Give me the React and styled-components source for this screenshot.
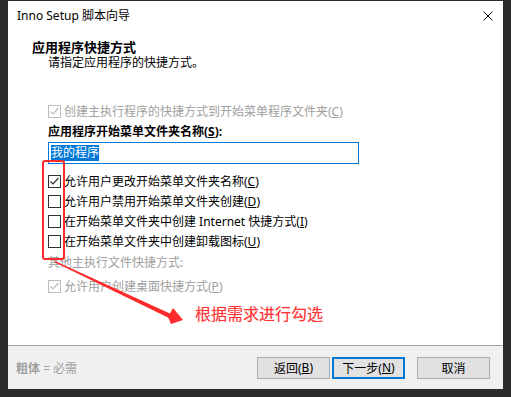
import React from "react";
import styled, { createGlobalStyle } from "styled-components";

const Global = createGlobalStyle`
  html, body { margin: 0; padding: 0; background: #2b2b2b; }
  body { font-family: "Noto Sans", "Noto Sans CJK SC", sans-serif; font-size: 12px; color: #000; }
  #root { width: 511px; height: 397px; padding-top: 1px; box-sizing: border-box; }
`;

const Window = styled.div`
  position: relative;
  margin-left: 8px;
  width: 495px;
  height: 388px;
  background: #fff;
  display: flex;
  flex-direction: column;
`;

const TitleBar = styled.div`
  height: 30px;
  display: flex;
  align-items: center;
  justify-content: space-between;
  padding: 0 10px 0 9px;
  font-size: 12px;
  line-height: 16px;
`;

const Close = styled.svg`
  width: 10px;
  height: 10px;
`;

const Header = styled.div`
  padding: 9px 0 0 24px;
  display: flex;
  flex-direction: column;
`;

const HeaderTitle = styled.div`
  font-weight: bold;
  font-size: 13px;
  line-height: 15px;
`;

const HeaderSub = styled.div`
  padding-left: 16px;
  line-height: 15px;
`;

const Body = styled.div`
  flex: 1;
  padding: 31px 0 0 40px;
  display: flex;
  flex-direction: column;
`;

const Row = styled.label`
  display: flex;
  align-items: center;
  height: 20px;
  margin-top: ${(p) => p.$mt || 0}px;
  color: ${(p) => (p.$disabled ? "#a0a0a0" : "#000")};
  white-space: nowrap;
`;

const Box = styled.span`
  width: 11px;
  height: 11px;
  border: 1px solid ${(p) => (p.$disabled ? "#bcbcbc" : "#333")};
  background: #fff;
  margin-right: 3px;
  display: flex;
  align-items: center;
  justify-content: center;
  flex: none;
`;

const Key = styled.span`
  text-decoration: underline;
`;

const Label = styled.div`
  font-weight: bold;
  height: 20px;
  line-height: 20px;
  margin-top: ${(p) => p.$mt || 0}px;
  color: ${(p) => (p.$disabled ? "#a0a0a0" : "#000")};
  white-space: nowrap;
`;

const Input = styled.div`
  width: 307px;
  height: 20px;
  border: 1px solid #0078d7;
  display: flex;
  align-items: center;
  padding-left: 2px;
  box-sizing: content-box;
`;

const Selected = styled.span`
  background: #0078d7;
  color: #fff;
  line-height: 16px;
`;

const Footer = styled.div`
  height: 43px;
  border-top: 1px solid #a0a0a0;
  background: #f0f0f0;
  display: flex;
  align-items: center;
  padding: 0 13px 0 8px;
`;

const Hint = styled.div`
  flex: 1;
  color: #a0a0a0;
  b { font-weight: bold; }
`;

const Button = styled.div`
  width: ${(p) => (p.$primary ? 69 : 71)}px;
  height: ${(p) => (p.$primary ? 18 : 20)}px;
  border: ${(p) => (p.$primary ? "2px solid #0078d7" : "1px solid #adadad")};
  background: #e1e1e1;
  display: flex;
  align-items: center;
  justify-content: center;
  margin-left: ${(p) => p.$ml || 0}px;
`;

const RedBox = styled.div`
  position: absolute;
  left: 34px;
  top: 159px;
  width: 19px;
  height: 96px;
  border: 2px solid #ff2a2a;
  border-radius: 3px;
  pointer-events: none;
`;

const Arrow = styled.svg`
  position: absolute;
  left: 0;
  top: 0;
  width: 495px;
  height: 388px;
  pointer-events: none;
`;

const Note = styled.div`
  position: absolute;
  left: 187px;
  top: 303px;
  font-size: 16px;
  line-height: 20px;
  color: #ff3333;
  text-shadow: 0 0 1px rgba(255, 80, 80, 0.4);
  white-space: nowrap;
`;

const Check = ({ disabled }) => (
  <svg width="11" height="11" viewBox="0 0 11 11">
    <polyline
      points="1.5,5.5 4,8 9.5,2"
      fill="none"
      stroke={disabled ? "#bcbcbc" : "#333"}
      strokeWidth="1.2"
    />
  </svg>
);

const CheckRow = ({ checked, disabled, mt, children }) => (
  <Row $disabled={disabled} $mt={mt}>
    <Box $disabled={disabled}>{checked && <Check disabled={disabled} />}</Box>
    <span>{children}</span>
  </Row>
);

export default function App() {
  return (
    <>
      <Global />
      <Window>
        <TitleBar>
          <span>Inno Setup 脚本向导</span>
          <Close viewBox="0 0 10 10">
            <path d="M0.5 0.5 L9.5 9.5 M9.5 0.5 L0.5 9.5" stroke="#000" strokeWidth="1" />
          </Close>
        </TitleBar>
        <Header>
          <HeaderTitle>应用程序快捷方式</HeaderTitle>
          <HeaderSub>请指定应用程序的快捷方式。</HeaderSub>
        </Header>
        <Body>
          <CheckRow checked disabled>
            创建主执行程序的快捷方式到开始菜单程序文件夹(<Key>C</Key>)
          </CheckRow>
          <Label $mt={1}>
            应用程序开始菜单文件夹名称(<Key>S</Key>):
          </Label>
          <Input>
            <Selected>我的程序</Selected>
          </Input>
          <CheckRow checked mt={7}>
            允许用户更改开始菜单文件夹名称(<Key>C</Key>)
          </CheckRow>
          <CheckRow>允许用户禁用开始菜单文件夹创建(<Key>D</Key>)</CheckRow>
          <CheckRow>在开始菜单文件夹中创建 Internet 快捷方式(<Key>I</Key>)</CheckRow>
          <CheckRow>在开始菜单文件夹中创建卸载图标(<Key>U</Key>)</CheckRow>
          <Label as="div" $mt={2} $disabled style={{ fontWeight: "normal" }}>
            其他主执行文件快捷方式:
          </Label>
          <CheckRow checked disabled mt={3}>
            允许用户创建桌面快捷方式(<Key>P</Key>)
          </CheckRow>
        </Body>
        <Footer>
          <Hint>
            <b>粗体</b> = 必需
          </Hint>
          <Button>返回(<Key>B</Key>)</Button>
          <Button $primary $ml={2}>下一步(<Key>N</Key>)</Button>
          <Button $ml={12}>取消</Button>
        </Footer>
        <RedBox />
        <Arrow viewBox="0 0 495 388">
          <polygon points="46,261 47,260 163,313 161,317" fill="#ff2a2a" />
          <polygon points="175,319 163,323 160,316 165,307" fill="#ff2a2a" />
        </Arrow>
        <Note>根据需求进行勾选</Note>
      </Window>
    </>
  );
}
